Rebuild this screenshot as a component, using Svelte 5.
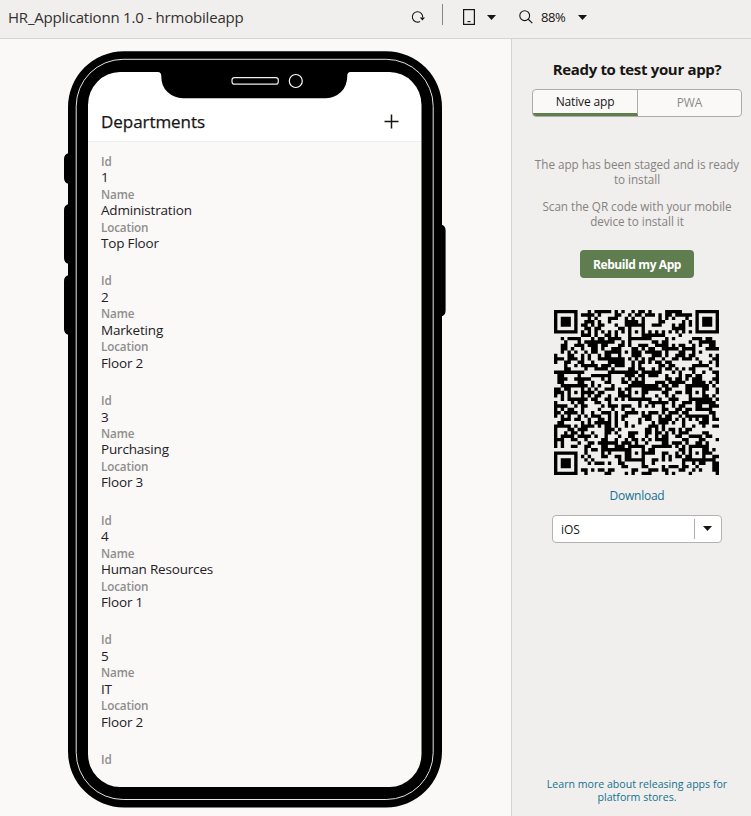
<script>
  const departments = [
    { id: '1', name: 'Administration', location: 'Top Floor' },
    { id: '2', name: 'Marketing', location: 'Floor 2' },
    { id: '3', name: 'Purchasing', location: 'Floor 3' },
    { id: '4', name: 'Human Resources', location: 'Floor 1' },
    { id: '5', name: 'IT', location: 'Floor 2' }
  ];

  // 49 x 49 module symbol: finders, alignment marks, timing lines and data.
  const size = 49;
  function buildCode() {
    const grid = Array.from({ length: size }, () => Array(size).fill(false));
    let seed = 20231;
    for (let y = 0; y < size; y++) {
      for (let x = 0; x < size; x++) {
        seed = (Math.imul(seed, 1103515245) + 12345) & 0x7fffffff;
        grid[y][x] = ((seed >> 16) & 255) < 130;
      }
    }
    for (let i = 0; i < size; i++) {
      grid[6][i] = i % 2 === 0;
      grid[i][6] = i % 2 === 0;
    }
    const mark = (cx, cy, r, dark) => {
      for (let y = cy - r; y <= cy + r; y++) {
        for (let x = cx - r; x <= cx + r; x++) {
          if (y < 0 || x < 0 || y >= size || x >= size) continue;
          grid[y][x] = dark(Math.max(Math.abs(x - cx), Math.abs(y - cy)));
        }
      }
    };
    for (const [x, y] of [[24, 6], [6, 24], [24, 24], [42, 24], [24, 42], [42, 42]]) {
      mark(x, y, 2, (d) => d !== 1);
    }
    for (const [x, y] of [[3, 3], [45, 3], [3, 45]]) {
      mark(x, y, 4, (d) => d < 2 || d === 3);
    }
    let path = '';
    grid.forEach((row, y) => row.forEach((on, x) => {
      if (on) path += `M${x} ${y}h1v1h-1z`;
    }));
    return path;
  }
  const code = buildCode();
</script>

<div class="app">
  <header>
    <div class="title">HR_Applicationn 1.0 - hrmobileapp</div>
    <div class="tools">
      <svg class="reload" width="16" height="16" viewBox="0 0 16 16">
        <path d="M10 12.5A5.200 5.200 0 1 1 12.700 8.500" fill="none" stroke="#161513" stroke-width="1.100" />
        <path d="M9.800 8.600h5.200l-2.600 3z" fill="#161513" />
      </svg>
      <i class="rule"></i>
      <svg class="device" width="12" height="16" viewBox="0 0 12 16">
        <rect x=".6" y=".6" width="10.8" height="14.8" fill="none" stroke="#161513" stroke-width="1.2" />
        <path d="M4.5 12.6h3" stroke="#161513" stroke-width="1.1" />
      </svg>
      <svg class="caret c1" width="9" height="5" viewBox="0 0 9 5"><path d="M0 0h9L4.5 5z" fill="#161513" /></svg>
      <svg class="search" width="14" height="14" viewBox="0 0 14 14">
        <circle cx="5.7" cy="5.7" r="4.9" fill="none" stroke="#161513" stroke-width="1.1" />
        <path d="M9.3 9.3l4 3.8" stroke="#161513" stroke-width="1.2" />
      </svg>
      <span class="zoom">88%</span>
      <svg class="caret c2" width="9" height="5" viewBox="0 0 9 5"><path d="M0 0h9L4.5 5z" fill="#161513" /></svg>
    </div>
  </header>

  <div class="body">
    <main>
      <div class="phone">
        <svg class="frame" width="382" height="758" viewBox="64 51 382 758">
          <path
            fill="#000"
            fill-rule="evenodd"
            d="M124 51.2H386A56 56 0 0 1 442 107.2V751.5A56 56 0 0 1 386 807.5H124A56 56 0 0 1 68 751.5V107.2A56 56 0 0 1 124 51.2Z
               M120 72A32 33 0 0 0 88 105V754A32 33 0 0 0 120 787H389.5A32 33 0 0 0 421.5 754V105A32 33 0 0 0 389.5 72H350.5Q347.3 72.3 347.3 75.5Q347.3 86 341 92T326 98.2H183Q174 98 167.500 92T161.300 75.500Q161 72.300 158 72Z"
          />
          <rect x="76.2" y="59.3" width="357" height="740.2" rx="47" fill="none" stroke="#e4e4e4" stroke-width="1" />
          <path d="M69 153q-5 1-5 6v19q0 5 5 6zM69 204q-5 1-5 6v48q0 5 5 6zM69 275q-5 1-5 6v48q0 5 5 6zM441 224.500q4.600 1 4.600 6v80q0 5-4.600 6z" fill="#000" />
          <rect x="232" y="77.600" width="46.300" height="6.600" rx="2.500" fill="none" stroke="#eee" stroke-width="1.200" />
          <circle cx="295.800" cy="81" r="6.500" fill="none" stroke="#fff" stroke-width="1.200" />
        </svg>
        <div class="screen">
          <div class="bar">
            <h1>Departments</h1>
            <svg width="15" height="15" viewBox="0 0 15 15"><path d="M0.500 7.500h14M7.500 .5v14" stroke="#161513" stroke-width="1.500" /></svg>
          </div>
          <div class="list">
            {#each departments as d}
              <dl>
                <dt>Id</dt><dd>{d.id}</dd>
                <dt>Name</dt><dd>{d.name}</dd>
                <dt>Location</dt><dd>{d.location}</dd>
              </dl>
            {/each}
            <dl><dt>Id</dt></dl>
          </div>
        </div>
      </div>
    </main>

    <aside>
      <h2>Ready to test your app?</h2>
      <div class="tabs">
        <button class="on">Native app</button>
        <button>PWA</button>
      </div>
      <p class="staged"><span>The app has been staged and is ready</span><span>to install</span></p>
      <p class="scan"><span>Scan the QR code with your mobile</span><span>device to install it</span></p>
      <button class="rebuild">Rebuild my App</button>
      <svg class="qr" width="165" height="165" viewBox="0 0 49 49"><path d={code} fill="#000" /></svg>
      <a class="download">Download</a>
      <div class="select">
        <span>iOS</span>
        <i></i>
        <svg width="9" height="5" viewBox="0 0 9 5"><path d="M0 0h9L4.5 5z" fill="#161513" /></svg>
      </div>
      <a class="learn"><span>Learn more about releasing apps for</span><span>platform stores.</span></a>
    </aside>
  </div>
</div>

<style>
  .app { width: 751px; height: 816px; overflow: hidden; display: flex; flex-direction: column; background: #fbf9f8; color: #161513; font-family: "Open Sans", "Noto Sans", sans-serif; }
  header { box-sizing: border-box; height: 39px; flex: none; display: flex; align-items: flex-start; background: #f0efed; border-bottom: 1px solid #d5d4d2; }
  .title { width: 404px; padding-left: 8px; box-sizing: border-box; font-size: 15px; line-height: 35px; letter-spacing: -0.2px; color: #33312e; white-space: nowrap; }
  .tools { display: flex; align-items: flex-start; }
  .reload { margin: 9px 0 0 6px; }
  .rule { width: 1px; height: 21px; margin: 4px 0 0 16px; background: #8b8580; }
  .device { margin: 9px 0 0 20px; }
  .c1 { margin: 15px 0 0 12px; }
  .search { margin: 10px 0 0 23px; }
  .zoom { width: 26px; margin-left: 8px; font-size: 13px; line-height: 35px; letter-spacing: -0.4px; }
  .c2 { margin: 15px 0 0 11px; }
  .body { flex: 1; display: flex; min-height: 0; }
  main { width: 511px; }
  .phone { position: relative; width: 382px; height: 758px; margin: 12px 0 0 64px; box-sizing: border-box; padding: 20px 24px 20px 23px; }
  .frame { position: absolute; left: 0; top: 0; z-index: 1; pointer-events: none; }
  .screen { height: 717px; border-radius: 36px; overflow: hidden; background: #fbf9f8; }
  .bar { height: 71px; box-sizing: border-box; display: flex; justify-content: space-between; align-items: flex-start; padding: 0 23px 0 14px; background: #fff; border-bottom: 1px solid #efeeec; }
  .bar svg { margin-top: 43px; }
  h1 { margin: 36px 0 0; font-size: 17px; line-height: 30px; font-weight: 500; letter-spacing: -0.05px; -webkit-text-stroke: 0.25px #161513; }
  .list { padding: 10.700px 14px; }
  dl { margin: 0 0 21px; height: 98.700px; }
  dt, dd { margin: 0; line-height: 16.450px; white-space: nowrap; }
  dt { font-size: 11.700px; font-weight: 600; color: #8f8d8b; letter-spacing: -0.15px; }
  dd { font-size: 13.500px; color: #22201e; letter-spacing: -0.18px; }
  aside { flex: 1; box-sizing: border-box; border-left: 1px solid #d5d4d2; background: #f0efed; display: flex; flex-direction: column; align-items: center; padding-left: 11px; }
  h2 { margin: 20px 0 0; font-size: 15px; line-height: 20px; font-weight: 700; letter-spacing: -0.33px; white-space: nowrap; }
  .tabs { width: 210px; height: 28px; box-sizing: border-box; margin-top: 10px; display: grid; grid-template-columns: 105px 1fr; border: 1px solid #aeaba8; border-radius: 4px; overflow: hidden; background: #fbf9f8; }
  button { font-family: inherit; border: 0; padding: 0; background: none; }
  .tabs button { font-size: 12px; line-height: 24px; color: #8b8988; letter-spacing: -0.15px; }
  .tabs .on { line-height: 22px; color: #161513; border-right: 1px solid #aeaba8; border-bottom: 3px solid #5f7d4f; }
  p { margin: 0; font-size: 11.700px; line-height: 15px; color: #85827f; text-align: center; white-space: nowrap; }
  p span, .learn span { display: block; height: 15px; letter-spacing: -0.03px; }
  .staged { margin-top: 40px; }
  .scan { margin-top: 12px; }
  .rebuild { width: 114px; height: 28px; margin-top: 21px; border-radius: 4px; background: #5f7d4f; color: #fff; font-size: 12px; font-weight: 700; line-height: 30px; letter-spacing: -0.4px; }
  .qr { margin: 31.500px 1px 0 0; }
  a { color: #14718f; font-size: 12px; white-space: nowrap; }
  .download { margin-top: 13.500px; line-height: 16px; letter-spacing: -0.25px; }
  .select { width: 170px; height: 28px; margin-top: 11px; box-sizing: border-box; display: flex; align-items: center; border: 1px solid #b5b3b1; border-radius: 4px; background: #fff; padding: 0 9px 0 8px; font-size: 12px; }
  .select span { flex: 1; }
  .select i { width: 1px; height: 20px; background: #b0aeac; margin-right: 8px; }
  .select svg { margin-bottom: 2px; }
  .learn { margin: auto 0 12px; font-size: 10.600px; line-height: 13px; text-align: center; }
  .learn span { height: 13px; letter-spacing: 0; }
</style>
